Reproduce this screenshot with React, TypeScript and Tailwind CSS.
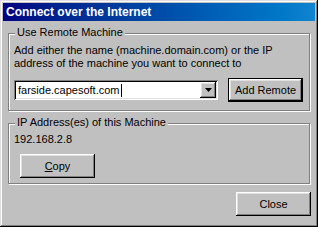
import React from 'react';

const raised =
    'shadow-[inset_-1px_-1px_0_#000,inset_1px_1px_0_#fff,inset_-2px_-2px_0_#808080,inset_2px_2px_0_#dfdfdf]';

function Button({
    children,
    isDefault,
    className = '',
}: {
    children: React.ReactNode;
    isDefault?: boolean;
    className?: string;
}) {
    if (isDefault) {
        return (
            <div className={`border border-black ${className}`}>
                <button
                    className={`flex h-full w-full items-center justify-center bg-[#c0c0c0] text-[11px] text-black ${raised}`}
                >
                    {children}
                </button>
            </div>
        );
    }
    return (
        <button
            className={`flex items-center justify-center bg-[#c0c0c0] text-[11px] text-black ${raised} ${className}`}
        >
            {children}
        </button>
    );
}

function GroupBox({
    label,
    children,
    className = '',
}: {
    label: string;
    children: React.ReactNode;
    className?: string;
}) {
    return (
        <div
            className={`relative border border-[#808080] shadow-[inset_1px_1px_0_#fff,1px_1px_0_#fff] ${className}`}
        >
            <span className="absolute left-[6px] top-[-8px] bg-[#c0c0c0] px-[2px] text-[11px] leading-[13px]">
                {label}
            </span>
            {children}
        </div>
    );
}

export default function App() {
    return (
        <div
            className="flex h-[227px] w-[318px] flex-col bg-[#c0c0c0] p-[3px] text-black shadow-[inset_-1px_-1px_0_#000,inset_1px_1px_0_#dfdfdf,inset_-2px_-2px_0_#808080,inset_2px_2px_0_#fff]"
            style={{ fontFamily: '"Liberation Sans", Arial, sans-serif' }}
        >
            <div className="flex h-[18px] items-center bg-gradient-to-r from-[#000080] to-[#1084d0] pl-[3px]">
                <span className="text-[12px] font-bold leading-none text-white">
                    Connect over the Internet
                </span>
            </div>

            <div className="flex flex-col px-[5px]">
                <GroupBox label="Use Remote Machine" className="mt-[12px] h-[78px]">
                    <div className="flex flex-col pl-[5px] pt-[10px]">
                        <p className="text-[11px] leading-[13px]">
                            Add either the name (machine.domain.com) or the IP
                            <br />
                            address of the machine you want to connect to
                        </p>
                        <div className="mt-[8px] flex items-center">
                            <div className="flex h-[20px] w-[204px] items-center bg-white p-[2px] shadow-[inset_1px_1px_0_#808080,inset_-1px_-1px_0_#fff,inset_2px_2px_0_#000,inset_-2px_-2px_0_#dfdfdf]">
                                <div className="flex flex-1 items-center pl-[2px] text-[11px] leading-[13px]">
                                    farside.capesoft.com
                                    <span className="ml-[1px] inline-block h-[13px] w-[1px] bg-black" />
                                </div>
                                <div
                                    className={`flex h-[16px] w-[16px] items-center justify-center bg-[#c0c0c0] ${raised}`}
                                >
                                    <svg width="7" height="4" viewBox="0 0 7 4">
                                        <path d="M0 0h7L3.5 4z" fill="#000" />
                                    </svg>
                                </div>
                            </div>
                            <Button isDefault className="ml-[10px] h-[24px] w-[75px]">
                                Add Remote
                            </Button>
                        </div>
                    </div>
                </GroupBox>

                <GroupBox label="IP Address(es) of this Machine" className="mt-[12px] h-[61px]">
                    <div className="flex flex-col pl-[5px] pt-[9px]">
                        <span className="text-[11px] leading-[13px]">192.168.2.8</span>
                        <Button className="ml-[6px] mt-[8px] h-[24px] w-[75px]">
                            <span>
                                <span className="underline">C</span>opy
                            </span>
                        </Button>
                    </div>
                </GroupBox>

                <div className="mr-[-1px] mt-[8px] flex justify-end">
                    <Button className="h-[24px] w-[75px]">Close</Button>
                </div>
            </div>
        </div>
    );
}
